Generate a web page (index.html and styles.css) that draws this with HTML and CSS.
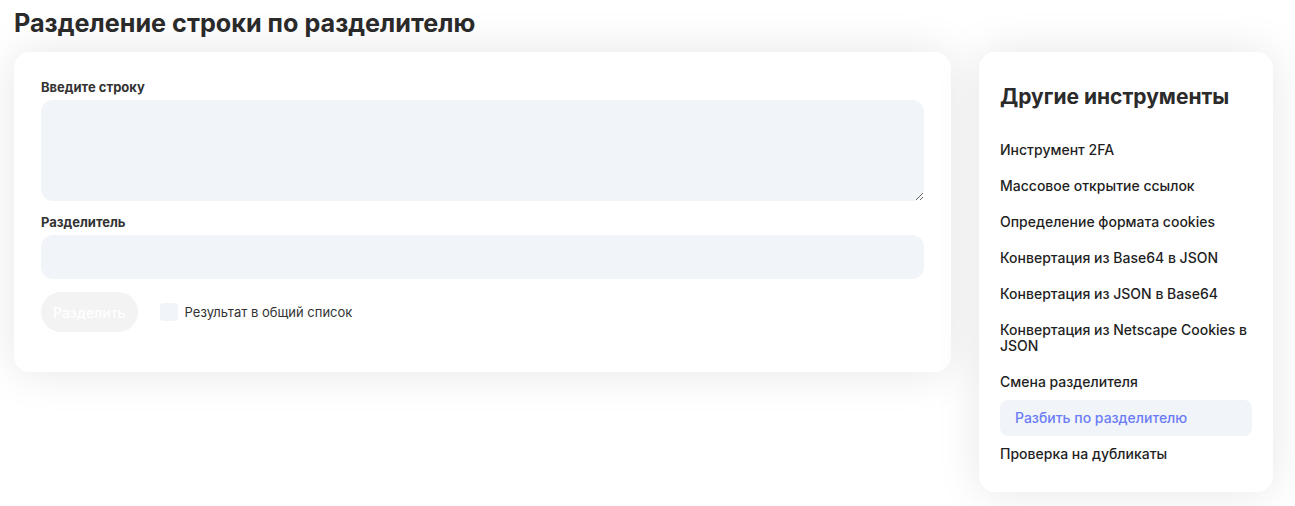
FILE: index.html
```html
<html>
    <head>
        <meta charset="utf-8">
        <title>Разделение строки по разделителю</title>
        <link rel="stylesheet" href="styles.css">
    </head>
    <body>
        <h1 class="page-title">Разделение строки по разделителю</h1>
        <div class="layout">
            <div class="card main">
                <label class="field-label">Введите строку</label>
                <textarea class="field area"></textarea>
                <label class="field-label">Разделитель</label>
                <input type="text" class="field line">
                <div class="actions">
                    <button class="btn" disabled>Разделить</button>
                    <label class="check"><span class="box"></span>Результат в общий список</label>
                </div>
            </div>
            <div class="card side">
                <h2 class="side-title">Другие инструменты</h2>
                <ul class="tools">
                    <li>Инструмент 2FA</li>
                    <li>Массовое открытие ссылок</li>
                    <li>Определение формата cookies</li>
                    <li>Конвертация из Base64 в JSON</li>
                    <li>Конвертация из JSON в Base64</li>
                    <li>Конвертация из Netscape Cookies в JSON</li>
                    <li>Смена разделителя</li>
                    <li class="active">Разбить по разделителю</li>
                    <li>Проверка на дубликаты</li>
                </ul>
            </div>
        </div>
    </body>
</html>
```

FILE: styles.css
```css
/* page */
body {
    margin: 0;
    padding: 0 22px 0 14px;
    background: #fff;
    color: #262626;
    font-family: Inter, "Noto Sans", sans-serif;
}
.page-title {
    margin: 0;
    padding-top: 7px;
    height: 45px;
    font-size: 25.2px;
    font-weight: 700;
    line-height: 32px;
    color: #2b2b2b;
}
.layout {
    display: flex;
    align-items: flex-start;
    gap: 28px;
}
.card {
    background: #fff;
    border-radius: 16px;
    box-shadow: 0 0 45px rgba(20, 20, 40, 0.1);
}
.main {
    flex: 1;
    padding: 27px 27px 40px 27px;
}
.field-label {
    display: block;
    font-size: 13px;
    font-weight: 700;
    line-height: 16px;
    color: #333;
    margin-bottom: 5px;
}
.field {
    display: block;
    width: 100%;
    box-sizing: border-box;
    border: none;
    outline: none;
    background: #f1f4f9;
    border-radius: 12px;
    font-family: inherit;
    font-size: 14px;
    padding: 12px 16px;
}
.area {
    height: 101px;
    margin-bottom: 13px;
    resize: vertical;
}
.line {
    height: 44px;
}
.actions {
    display: flex;
    align-items: center;
    margin-top: 13px;
    gap: 22px;
}
.btn {
    height: 40px;
    padding: 0 12px;
    border: none;
    border-radius: 20px;
    background: #f3f3f3;
    color: #fff;
    font-family: inherit;
    font-size: 14px;
    font-weight: 500;
}
.check {
    display: flex;
    align-items: center;
    gap: 7px;
    font-size: 13px;
    color: #333;
}
.box {
    width: 18px;
    height: 18px;
    border-radius: 4px;
    background: #f1f4f9;
}
.side {
    width: 252px;
    padding: 29px 21px 20px 21px;
}
.side-title {
    margin: 0 0 19px 0;
    font-size: 21px;
    font-weight: 700;
    line-height: 32px;
    color: #2b2b2b;
}
.tools {
    list-style: none;
    margin: 0;
    padding: 0;
}
.tools li {
    font-size: 14px;
    font-weight: 500;
    line-height: 16px;
    color: #1f1f1f;
    padding: 10px 0;
}
.tools li.active {
    background: #f1f4f9;
    border-radius: 8px;
    color: #6b7cf6;
    padding: 10px 15px;
    margin: 0;
}
```
